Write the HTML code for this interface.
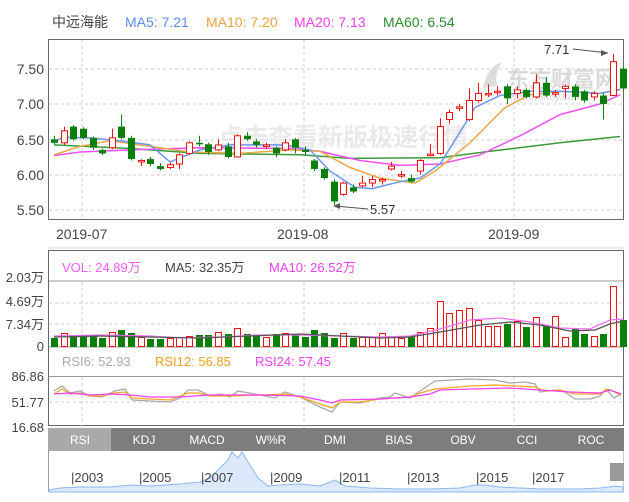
<!DOCTYPE html>
<html><head><meta charset="utf-8"><style>
html,body{margin:0;padding:0;background:#fff;width:629px;height:502px;overflow:hidden}
svg{display:block}
text{font-family:"Liberation Sans","Noto Sans CJK SC",sans-serif}
</style></head><body>
<svg id="s" width="629" height="502" viewBox="0 0 629 502" xmlns="http://www.w3.org/2000/svg">
<rect width="629" height="502" fill="#fff"/>
<g font-size="14">
<text x="52" y="27" fill="#444">中远海能</text>
<text x="125" y="27" fill="#5b8ef0">MA5: 7.21</text>
<text x="206" y="27" fill="#e8a23a">MA10: 7.20</text>
<text x="294" y="27" fill="#f040f0">MA20: 7.13</text>
<text x="383" y="27" fill="#2e8b2e">MA60: 6.54</text>
</g>
<!-- main box -->
<rect x="48.5" y="39.5" width="575" height="180" fill="none" stroke="#666"/>
<g stroke="#ccc" stroke-dasharray="3,3">
<line x1="49" y1="69" x2="623" y2="69"/><line x1="49" y1="104" x2="623" y2="104"/>
<line x1="49" y1="140" x2="623" y2="140"/><line x1="49" y1="175" x2="623" y2="175"/>
<line x1="49" y1="210" x2="623" y2="210"/>
<line x1="82" y1="40" x2="82" y2="219"/><line x1="304" y1="40" x2="304" y2="219"/><line x1="514" y1="40" x2="514" y2="219"/>
</g>
<g font-size="14" fill="#444" text-anchor="end">
<text x="44" y="74">7.50</text><text x="44" y="109">7.00</text><text x="44" y="145">6.50</text><text x="44" y="180">6.00</text><text x="44" y="215">5.50</text>
</g>
<!-- watermarks -->
<text x="343" y="146" font-size="25" font-weight="bold" fill="#e6e6e6" text-anchor="middle" opacity="0.8">点击查看新版极速行情</text>
<text x="507" y="87" font-size="22" font-weight="bold" fill="#d9d9d9">东方财富网</text>
<text x="508" y="100" font-size="10" font-weight="bold" fill="#ddd">eastmoney.com</text>
<path d="M483 88 Q488 66 502 62 Q494 74 497 86 Z" fill="#ddd"/>
<g id="main"></g>
<g font-size="14" fill="#444">
<text x="56" y="239">2019-07</text><text x="277" y="239">2019-08</text><text x="488" y="239">2019-09</text>
</g>
<line x1="48" y1="248" x2="624" y2="248" stroke="#ddd"/>
<!-- volume -->
<rect x="48.5" y="250.5" width="575" height="175" fill="none" stroke="#666"/>
<line x1="49" y1="281" x2="623" y2="281" stroke="#999"/>
<line x1="49" y1="347" x2="623" y2="347" stroke="#999"/>
<line x1="49" y1="376.5" x2="623" y2="376.5" stroke="#999"/>
<g font-size="13">
<text x="62" y="272" fill="#f060f0">VOL: 24.89万</text>
<text x="165" y="272" fill="#444">MA5: 32.35万</text>
<text x="269" y="272" fill="#f040f0">MA10: 26.52万</text>
<text x="62" y="366" fill="#aaa">RSI6: 52.93</text>
<text x="155" y="366" fill="#f0a020">RSI12: 56.85</text>
<text x="255" y="366" fill="#f040f0">RSI24: 57.45</text>
</g>
<g stroke="#ccc" stroke-dasharray="3,3">
<line x1="49" y1="303" x2="623" y2="303"/><line x1="49" y1="324" x2="623" y2="324"/>
<line x1="49" y1="402" x2="623" y2="402"/>
<line x1="82" y1="282" x2="82" y2="347"/><line x1="304" y1="282" x2="304" y2="347"/><line x1="514" y1="282" x2="514" y2="347"/>
<line x1="82" y1="377" x2="82" y2="428"/><line x1="304" y1="377" x2="304" y2="428"/><line x1="514" y1="377" x2="514" y2="428"/>
</g>
<g font-size="13" fill="#444" text-anchor="end">
<text x="44" y="282">2.03万</text><text x="44" y="306">4.69万</text><text x="44" y="329">7.34万</text><text x="44" y="351">0</text>
<text x="44" y="381">86.86</text><text x="44" y="407">51.77</text><text x="44" y="432">16.68</text>
</g>
<g id="vol"></g>
<g id="rsi" fill="none" stroke-width="1.3"></g>
<!-- tabs -->
<rect x="48" y="428" width="576" height="23" fill="#7d7d7d"/>
<rect x="48" y="428" width="63" height="23" fill="#a9a9a9"/>
<g font-family="Liberation Mono,monospace" font-size="12" fill="#fff" text-anchor="middle">
<text x="80" y="444" font-family="Liberation Mono,monospace">RSI</text>
<text x="144" y="444" font-family="Liberation Mono,monospace">KDJ</text>
<text x="207" y="444" font-family="Liberation Mono,monospace">MACD</text>
<text x="271" y="444" font-family="Liberation Mono,monospace">W%R</text>
<text x="335" y="444" font-family="Liberation Mono,monospace">DMI</text>
<text x="399" y="444" font-family="Liberation Mono,monospace">BIAS</text>
<text x="463" y="444" font-family="Liberation Mono,monospace">OBV</text>
<text x="527" y="444" font-family="Liberation Mono,monospace">CCI</text>
<text x="591" y="444" font-family="Liberation Mono,monospace">ROC</text>
</g>
<!-- navigator -->
<line x1="48.5" y1="451" x2="48.5" y2="492" stroke="#999"/>
<line x1="623.5" y1="451" x2="623.5" y2="492" stroke="#ccc"/>
<path d="M49 490 L60 488 L80 487 L110 487 L130 485 L150 486 L180 484 L200 482 L210 478 L220 468 L228 460 L232 452 L238 458 L242 452 L248 462 L252 468 L258 478 L268 486 L280 485 L300 484 L320 486 L335 480 L345 486 L370 488 L400 489 L430 489 L460 488 L475 485 L485 485 L500 487 L540 489 L580 489 L600 488 L615 486 L623 487 L623 492 L49 492 Z" fill="#dce9fb" stroke="#8ab8ee" stroke-width="1"/>
<g font-size="13" fill="#444">
<text x="71" y="482">|2003</text><text x="139" y="482">|2005</text><text x="201" y="482">|2007</text><text x="270" y="482">|2009</text><text x="339" y="482">|2011</text><text x="407" y="482">|2013</text><text x="476" y="482">|2015</text><text x="532" y="482">|2017</text>
</g>
<rect x="610" y="463" width="14" height="18" fill="#999"/>
</svg>
<script>
var NS="http://www.w3.org/2000/svg";
function el(p,t,a){var e=document.createElementNS(NS,t);for(var k in a)e.setAttribute(k,a[k]);p.appendChild(e);return e;}
function py(p){return 104+(7.0-p)*70.6;}
var D=[[6.50,6.45,6.55,6.43],[6.45,6.62,6.68,6.42],[6.68,6.50,6.70,6.48],[6.65,6.52,6.67,6.50],[6.52,6.38,6.54,6.35],[6.35,6.30,6.37,6.28],[6.38,6.52,6.65,6.36],[6.68,6.52,6.85,6.50],[6.52,6.22,6.55,6.20],[6.18,6.20,6.22,6.12],[6.22,6.15,6.25,6.12],[6.12,6.08,6.16,6.06],[6.10,6.14,6.17,6.08],[6.15,6.28,6.30,6.08],[6.30,6.45,6.47,6.28],[6.45,6.43,6.55,6.40],[6.43,6.32,6.45,6.28],[6.35,6.42,6.50,6.33],[6.40,6.25,6.45,6.23],[6.25,6.55,6.57,6.24],[6.55,6.50,6.60,6.48],[6.47,6.42,6.50,6.38],[6.40,6.42,6.45,6.36],[6.38,6.30,6.40,6.25],[6.35,6.45,6.50,6.33],[6.50,6.38,6.52,6.30],[6.35,6.32,6.40,6.28],[6.20,6.08,6.22,6.05],[6.08,5.95,6.10,5.93],[5.90,5.62,5.93,5.57],[5.72,5.88,5.90,5.70],[5.82,5.76,5.86,5.74],[5.84,5.88,5.98,5.82],[5.88,5.93,5.98,5.82],[5.92,5.93,5.96,5.86],[6.08,6.12,6.18,6.06],[5.98,6.00,6.05,5.95],[5.95,5.90,6.00,5.88],[6.05,6.20,6.22,6.00],[6.28,6.29,6.43,6.26],[6.30,6.68,6.80,6.28],[6.78,6.88,6.92,6.72],[6.95,6.96,7.00,6.90],[6.78,7.05,7.22,6.76],[7.05,7.15,7.30,7.02],[7.13,7.15,7.28,7.10],[7.17,7.18,7.25,7.12],[7.25,7.08,7.28,7.00],[7.15,7.20,7.25,7.08],[7.20,7.10,7.22,7.08],[7.10,7.30,7.42,7.08],[7.30,7.12,7.38,7.10],[7.15,7.16,7.20,7.10],[7.22,7.25,7.28,7.08],[7.25,7.10,7.28,7.05],[7.18,7.05,7.20,7.02],[7.10,7.15,7.18,7.05],[7.12,7.00,7.15,6.78],[7.12,7.60,7.71,7.12],[7.50,7.22,7.52,7.20]];
var V=[7,10,9,9,9,7,11,13,11,7,6,6,6,7,8,9,9,11,10,14,10,9,7,10,10,9,8,13,11,7,10,7,7,7,10,8,6,8,11,14,45,25,28,29,20,15,15,18,19,15,22,16,23,7,14,10,8,10,60,21,16];
var g=document.getElementById("main"),vg=document.getElementById("vol");
function line(pts,c,w){var d=pts.map(function(p,i){return (i?"L":"M")+p[0]+" "+py(p[1]).toFixed(1)}).join(" ");el(g,"path",{d:d,fill:"none",stroke:c,"stroke-width":w||1.3});}
line([[54,6.42],[130,6.37],[200,6.30],[300,6.28],[350,6.23],[440,6.24],[490,6.33],[560,6.45],[620,6.54]],"#3a9a3a",1.5);
line([[54,6.27],[80,6.32],[130,6.35],[200,6.38],[290,6.37],[320,6.33],[360,6.20],[400,6.13],[440,6.15],[480,6.28],[520,6.55],[560,6.85],[600,7.0],[620,7.13]],"#f050f0",1.5);
line([[54,6.28],[80,6.40],[110,6.48],[150,6.40],[190,6.32],[240,6.30],[290,6.35],[320,6.33],[350,6.10],[380,5.95],[415,5.88],[435,6.05],[470,6.45],[505,6.95],[530,7.13],[560,7.18],[600,7.15],[620,7.20]],"#e8a848",1.5);
line([[54,6.47],[64,6.53],[90,6.52],[120,6.48],[150,6.42],[170,6.18],[200,6.35],[230,6.42],[285,6.42],[310,6.35],[330,6.05],[355,5.82],[372,5.80],[400,5.90],[420,5.95],[440,6.15],[460,6.60],[475,6.95],[500,7.12],[530,7.18],[560,7.18],[600,7.15],[620,7.21]],"#6a98ee",1.5);
D.forEach(function(d,i){
 var x=Math.round(54+i*9.64),o=d[0],c=d[1],up=c>=o;
 var col=up?"#f01010":"#0a800a";
 var t=py(Math.max(o,c)),b=py(Math.min(o,c));if(b-t<1.5)b=t+1.5;
 el(g,"line",{x1:x+0.5,y1:py(d[2]),x2:x+0.5,y2:t,stroke:col});
 el(g,"line",{x1:x+0.5,y1:b,x2:x+0.5,y2:py(d[3]),stroke:col});
 if(up)el(g,"rect",{x:x-2.5,y:t,width:6,height:b-t,fill:"#fff",stroke:col});
 else el(g,"rect",{x:x-3,y:t,width:7,height:b-t,fill:col});
 var h=V[i]; if(h<30)h=Math.round(h*1.3);
 if(up)el(vg,"rect",{x:x-2.5,y:346.5-h,width:6,height:h,fill:"#fff",stroke:col});
 else el(vg,"rect",{x:x-3,y:347-h,width:7,height:h,fill:col});
});
function vl(pts,c){var d=pts.map(function(p,i){return (i?"L":"M")+p[0]+" "+p[1]}).join(" ");el(vg,"path",{d:d,fill:"none",stroke:c,"stroke-width":1.3});}
vl([[54,336],[100,335],[150,336],[180,338],[220,337],[260,335],[300,335],[340,336],[380,337],[410,336],[440,329],[470,320],[500,318],[530,322],[560,328],[590,329],[610,320],[623,319]],"#f070f0");
vl([[54,337],[100,336],[150,337],[200,338],[250,336],[300,334],[340,336],[380,338],[410,337],[440,332],[480,325],[510,322],[540,325],[570,331],[595,330],[610,324],[623,321]],"#555");
// annotations
el(g,"line",{x1:573,y1:49,x2:608,y2:53,stroke:"#555"});
el(g,"path",{d:"M608 53 L601 50 L601 56 Z",fill:"#555"});
var t1=el(g,"text",{x:544,y:54,"font-size":13,fill:"#333"});t1.textContent="7.71";
el(g,"line",{x1:335,y1:206,x2:368,y2:209,stroke:"#555"});
el(g,"path",{d:"M333 206 L340 203 L340 209 Z",fill:"#555"});
var t2=el(g,"text",{x:370,y:214,"font-size":13,fill:"#333"});t2.textContent="5.57";
// rsi
var rg=document.getElementById("rsi");
function rl(pts,c){var d=pts.map(function(p,i){return (i?"L":"M")+p[0]+" "+p[1]}).join(" ");el(rg,"path",{d:d,stroke:c});}
rl([[54,391],[62,386],[70,393],[80,391],[90,396],[102,397],[115,391],[125,389],[132,400],[150,401],[170,402],[180,398],[188,390],[198,390],[210,396],[220,394],[230,397],[238,391],[260,395],[275,398],[285,392],[300,397],[320,407],[332,412],[340,402],[360,403],[380,398],[390,397],[395,393],[410,398],[420,391],[435,381],[470,379],[495,380],[510,383],[525,382],[535,384],[540,392],[555,390],[565,392],[575,399],[590,399],[600,396],[606,389],[614,398],[621,394]],"#aaa");
rl([[54,394],[62,389],[70,394],[80,393],[90,396],[102,396],[115,393],[125,392],[132,398],[150,399],[170,400],[188,393],[198,393],[210,396],[230,396],[260,395],[285,394],[300,397],[320,404],[332,408],[340,402],[360,402],[380,399],[410,397],[420,393],[435,389],[470,386],[495,385],[515,386],[535,387],[545,391],[560,390],[575,394],[600,394],[608,389],[621,395]],"#f5a623");
rl([[54,394],[70,393],[90,395],[110,394],[130,395],[150,397],[180,397],[210,395],[260,395],[300,396],[320,400],[332,403],[340,400],[380,399],[410,397],[430,394],[440,390],[470,389],[510,388],[540,390],[570,392],[600,393],[610,390],[621,394]],"#f040f0");
</script>
</body></html>
